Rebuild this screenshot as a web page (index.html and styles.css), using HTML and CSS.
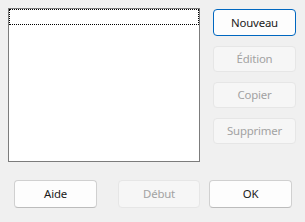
FILE: index.html
```html
<!DOCTYPE html>
<html>
<head>
<meta charset="utf-8">
<link rel="stylesheet" href="styles.css">
</head>
<body>
<div class="dialog">
  <div class="top">
    <div class="listbox">
      <div class="focus-row"></div>
    </div>
    <div class="side">
      <button class="btn default">Nouveau</button>
      <button class="btn disabled">Édition</button>
      <button class="btn disabled">Copier</button>
      <button class="btn disabled">Supprimer</button>
    </div>
  </div>
  <div class="bottom">
    <button class="btn wide">Aide</button>
    <button class="btn wide disabled debut">Début</button>
    <button class="btn wide ok">OK</button>
  </div>
</div>
</body>
</html>
```
FILE: styles.css
```css
html, body {
  margin: 0;
  padding: 0;
  background: #f0f0f0;
}
.dialog {
  width: 305px;
  height: 222px;
  box-sizing: border-box;
  padding: 8px 0 0 8px;
  font-family: "Segoe UI", "Noto Sans", "Liberation Sans", sans-serif;
  font-size: 11.4px;
}
.top {
  display: flex;
  align-items: flex-start;
}
.listbox {
  width: 192px;
  height: 154px;
  box-sizing: border-box;
  border: 1px solid #7c7c7c;
  background: #ffffff;
}
.focus-row {
  height: 16px;
  box-sizing: border-box;
  border: 1px dotted #000000;
}
.side {
  display: flex;
  flex-direction: column;
  gap: 10px;
  margin-left: 13px;
  padding-top: 1px;
}
.btn {
  font-family: inherit;
  font-size: 11.4px;
  letter-spacing: -0.2px;
  color: #1a1a1a;
  background: #fdfdfd;
  border: 1px solid #d0d0d0;
  border-bottom-color: #bcbcbc;
  border-radius: 4px;
  width: 83px;
  height: 26px;
  padding: 0;
  margin: 0;
  line-height: 1;
}
.side .default {
  height: 27px;
  border: 1px solid #0067c0;
}
.btn.disabled {
  background: #f6f6f6;
  border-color: #e6e6e6;
  color: #a2a2a2;
}
.bottom {
  display: flex;
  margin-top: 18px;
  padding-left: 6px;
}
.btn.wide {
  height: 28px;
}
.debut {
  width: 82px;
  margin-left: 21px;
}
.ok {
  margin-left: 9px;
}
```
